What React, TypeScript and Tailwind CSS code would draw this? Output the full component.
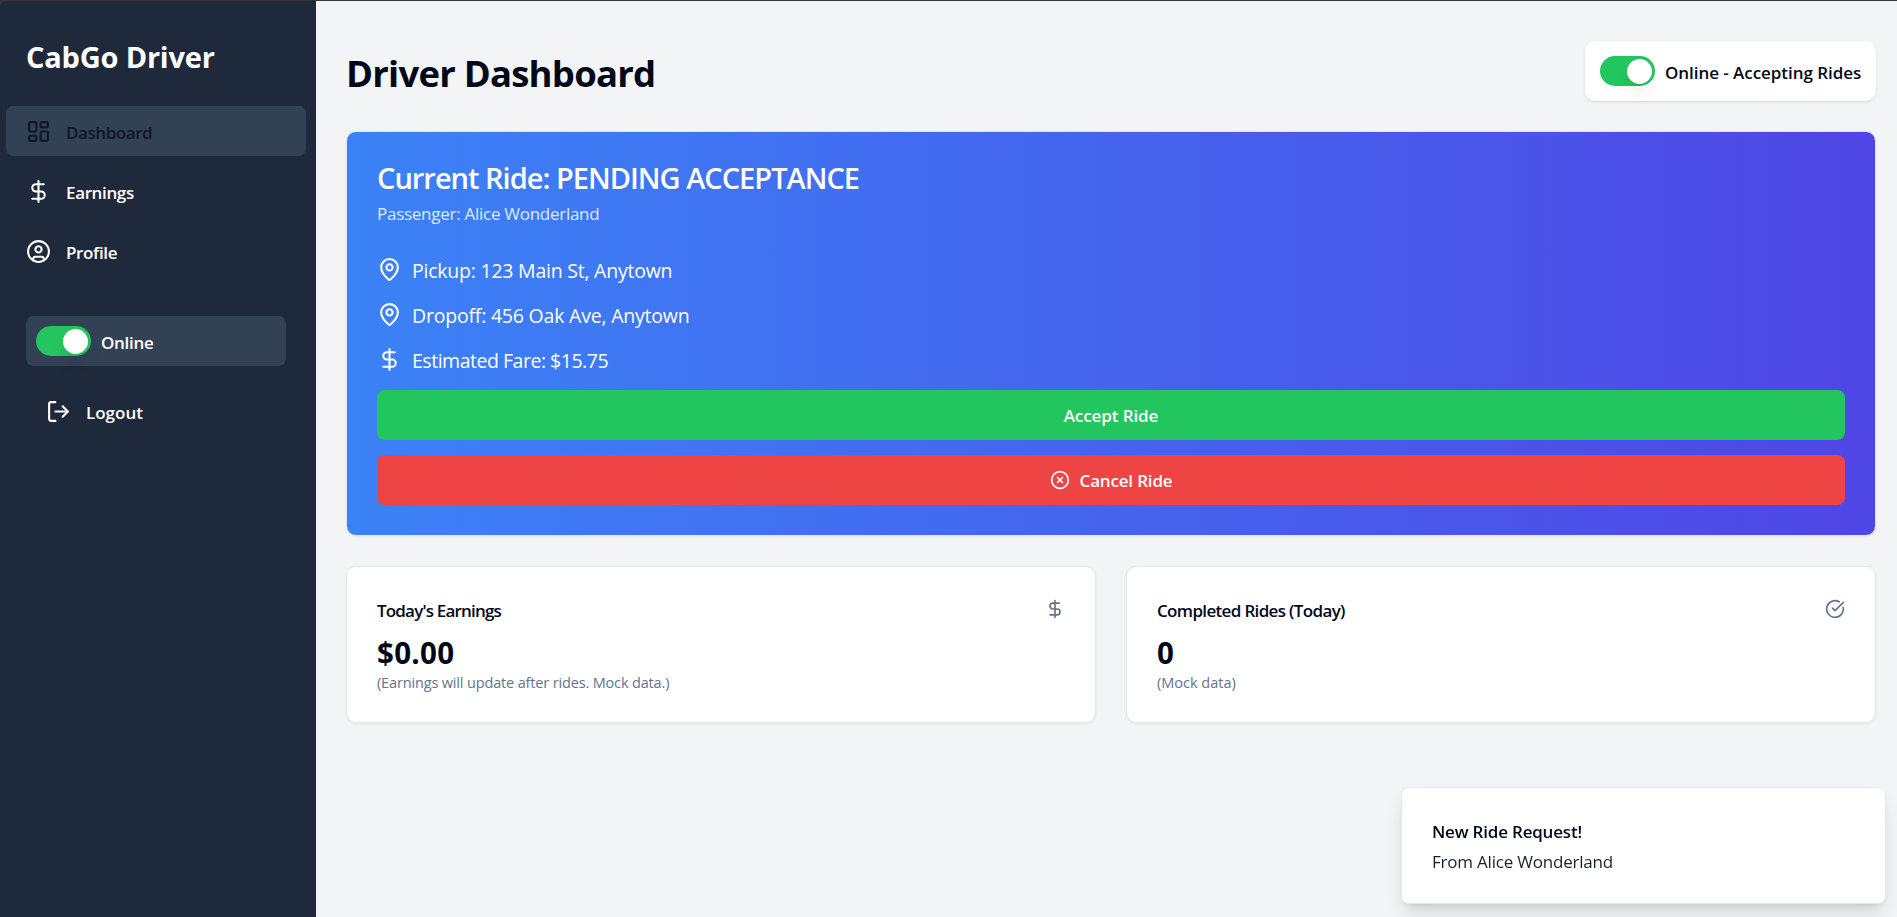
import type { ReactNode } from 'react';
import { CircleCheckBig, CircleX, DollarSign, LayoutDashboard, LogOut, MapPin } from 'lucide-react';

function Toggle() {
  return (
    <button
      type="button"
      role="switch"
      aria-checked="true"
      className="flex h-[30px] w-[55px] shrink-0 items-center justify-end rounded-full bg-[#22c55e] pr-[3px]"
    >
      <span className="size-[25px] rounded-full bg-white shadow-[0_12px_19px_-4px_rgb(0_0_0/0.1),0_5px_8px_-5px_rgb(0_0_0/0.1)]" />
    </button>
  );
}

function ProfileIcon() {
  return (
    <svg
      viewBox="0 0 24 24"
      className="size-[25px]"
      fill="none"
      stroke="currentColor"
      strokeWidth="2"
      strokeLinecap="round"
      strokeLinejoin="round"
    >
      <circle cx="12" cy="12" r="10" />
      <circle cx="12" cy="10" r="3" />
      <path d="M7 20.662V19a2 2 0 0 1 2-2h6a2 2 0 0 1 2 2v1.662" />
    </svg>
  );
}

function NavItem({ icon, label, className }: { icon: ReactNode; label: string; className: string }) {
  return (
    <a className={`flex h-[50px] items-center gap-[15px] rounded-[7.5px] px-5 text-[17px] font-semibold ${className}`}>
      {icon}
      <span className="pt-[3px]">{label}</span>
    </a>
  );
}

function RideRow({ icon, label, className }: { icon: ReactNode; label: string; className: string }) {
  return (
    <div className="flex h-[35px] items-center gap-2.5">
      {icon}
      <span className={`pt-px text-[19.5px] leading-[35px] ${className}`}>{label}</span>
    </div>
  );
}

function StatCard({
  title,
  titleClass,
  icon,
  value,
  note,
  noteClass,
}: {
  title: string;
  titleClass: string;
  icon: ReactNode;
  value: string;
  note: string;
  noteClass: string;
}) {
  return (
    <section className="h-[157px] rounded-[10px] border border-[#e2e8f0] bg-white p-[30px] shadow-[0_1px_3px_rgb(0_0_0/0.06)]">
      <div className="flex h-6 items-center justify-between">
        <h3 className={`pt-0.5 text-[17px] leading-[25px] font-semibold ${titleClass}`}>{title}</h3>
        {icon}
      </div>
      <div className="mt-3 text-[29.5px] leading-10 font-bold tracking-[0.3px]">{value}</div>
      <p className={`text-[14.5px] leading-5 text-[#64748b] ${noteClass}`}>{note}</p>
    </section>
  );
}

export default function App() {
  return (
    <div className="flex h-screen overflow-hidden border-t border-[#353539] bg-[#353539] font-['Open_Sans','Noto_Sans',sans-serif] text-[#020817]">
      <aside className="w-[316px] shrink-0 rounded-tl-[6px] bg-[#1e293b] pt-9 text-white">
        <h1 className="pl-[26px] text-[29px] leading-10 font-bold tracking-[-0.2px]">CabGo Driver</h1>
        <nav className="mt-[29px] flex flex-col gap-2.5 pr-2.5 pl-1.5">
          <NavItem
            icon={<LayoutDashboard className="size-[25px]" />}
            label="Dashboard"
            className="bg-[#334155] tracking-[-0.43px] text-[#0f172a]"
          />
          <NavItem icon={<DollarSign className="size-[25px]" />} label="Earnings" className="tracking-[-0.36px]" />
          <NavItem icon={<ProfileIcon />} label="Profile" className="tracking-[-0.36px]" />
        </nav>
        <div className="mt-10 mr-[30px] ml-[26px] flex h-[50px] items-center gap-2.5 rounded-[7.5px] bg-[#334155] px-2.5">
          <Toggle />
          <span className="pt-[3px] text-[17px] font-semibold tracking-[-0.3px]">Online</span>
        </div>
        <div className="mt-5 mr-[30px] ml-[26px]">
          <NavItem icon={<LogOut className="size-[25px]" />} label="Logout" className="" />
        </div>
      </aside>

      <main className="min-w-0 flex-1 bg-[#f3f4f6] pt-10 pr-[21px] pl-[30px]">
        <header className="flex h-[60px] items-center justify-between">
          <h2 className="pt-1 text-[36.5px] leading-[50px] font-bold tracking-[-0.77px]">Driver Dashboard</h2>
          <div className="flex h-[60px] w-[291px] items-center gap-2.5 rounded-[10px] bg-white pl-[15px] shadow-[0_1px_3px_rgb(0_0_0/0.1),0_1px_2px_-1px_rgb(0_0_0/0.1)]">
            <Toggle />
            <span className="pt-[3px] text-[17px] font-semibold tracking-[-0.05px] whitespace-nowrap">
              Online - Accepting Rides
            </span>
          </div>
        </header>

        <section className="mt-[30px] h-[405px] rounded-[10px] border border-[#e2e8f0] bg-[linear-gradient(to_right,#3b82f6,#4f46e5)] p-[30px] text-white shadow-[0_1px_3px_rgb(0_0_0/0.06)]">
          <h3 className="pt-px text-[29px] leading-[30px] font-semibold tracking-[-0.99px]">
            Current Ride: PENDING ACCEPTANCE
          </h3>
          <p className="mt-2 text-[17px] leading-[25px] tracking-[-0.27px] text-[#dbeafe]">
            Passenger: Alice Wonderland
          </p>
          <div className="mt-[26px] flex flex-col gap-2.5">
            <RideRow
              icon={<MapPin className="size-[25px]" />}
              label="Pickup: 123 Main St, Anytown"
              className="tracking-[-0.23px]"
            />
            <RideRow
              icon={<MapPin className="size-[25px]" />}
              label="Dropoff: 456 Oak Ave, Anytown"
              className="tracking-[-0.21px]"
            />
            <RideRow
              icon={<DollarSign className="size-[25px]" />}
              label="Estimated Fare: $15.75"
              className="tracking-[-0.48px]"
            />
          </div>
          <button
            type="button"
            className="mt-[13px] flex h-[50px] w-full items-center justify-center rounded-[7.5px] bg-[#22c55e] pt-px text-[17px] font-semibold tracking-[-0.1px]"
          >
            Accept Ride
          </button>
          <button
            type="button"
            className="mt-[15px] flex h-[50px] w-full items-center justify-center gap-2.5 rounded-[7.5px] bg-[#ef4444] text-[17px] font-semibold tracking-[-0.17px]"
          >
            <CircleX className="size-5" />
            <span className="pt-px">Cancel Ride</span>
          </button>
        </section>

        <div className="mt-[30px] grid grid-cols-2 gap-[30px]">
          <StatCard
            title="Today's Earnings"
            titleClass="tracking-[-0.82px]"
            icon={<DollarSign className="size-5 text-[#64748b]" />}
            value="$0.00"
            note="(Earnings will update after rides. Mock data.)"
            noteClass="tracking-[-0.155px]"
          />
          <StatCard
            title="Completed Rides (Today)"
            titleClass="tracking-[-0.66px]"
            icon={<CircleCheckBig className="size-5 text-[#64748b]" />}
            value="0"
            note="(Mock data)"
            noteClass=""
          />
        </div>
      </main>

      <div className="fixed right-[11px] bottom-[13px] h-[117px] w-[485px] rounded-[7.5px] border border-[#e2e8f0] bg-white p-[30px] text-[17px] leading-[25px] shadow-[0_12px_19px_-4px_rgb(0_0_0/0.13),0_5px_8px_-5px_rgb(0_0_0/0.12)]">
        <p className="pt-px font-semibold tracking-[-0.2px]">New Ride Request!</p>
        <p className="mt-[5px] tracking-[-0.21px] opacity-90">From Alice Wonderland</p>
      </div>
    </div>
  );
}
